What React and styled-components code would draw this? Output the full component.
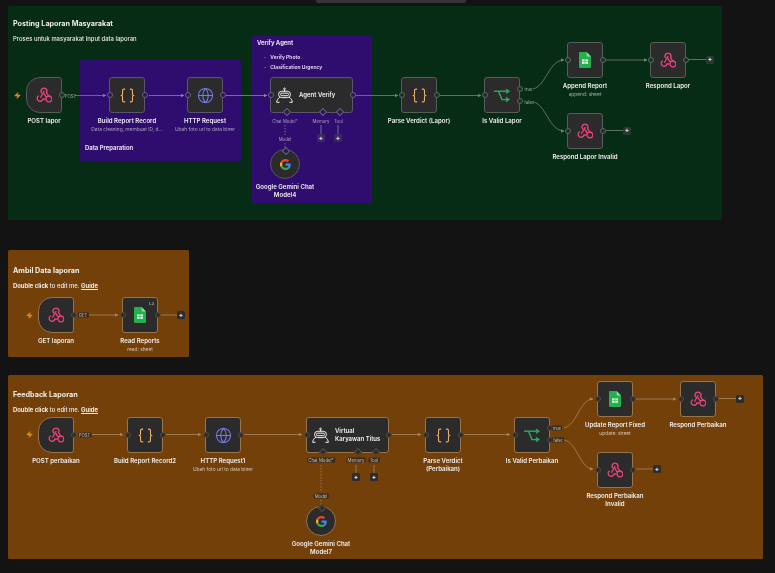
import React from "react";
import styled, { createGlobalStyle } from "styled-components";
import { Braces, Globe, Zap } from "lucide-react";

const GlobalStyle = createGlobalStyle`
  html, body {
    margin: 0;
    padding: 0;
    background: #131313;
  }
`;

const tones = {
  green: { line: "#77827a", handle: "#1d2f23", ring: "#5d675f", border: "#565e58", chip: "transparent", plus: "#2b3a30", sub: "#a3aca5" },
  purple: { line: "#8a8597", handle: "#281a4f", ring: "#676378", border: "#5a5568", chip: "transparent", plus: "#3a2a60", sub: "#aaa2be" },
  brown: { line: "#a68760", handle: "#2c2c2d", ring: "#5a4c3c", border: "#98744a", chip: "#33291f", plus: "#2c2c2d", sub: "#d6c4ae" },
};

const Canvas = styled.div`
  position: relative;
  width: 775px;
  height: 573px;
  overflow: hidden;
  font-family: Inter, "Liberation Sans", sans-serif;
  background-color: #131313;
  background-image: radial-gradient(#242424 0.6px, transparent 0.7px);
  background-size: 6px 6px;
  filter: blur(0.3px);
`;

const TopBar = styled.div`
  position: absolute;
  left: 316px;
  top: 0;
  width: 150px;
  height: 3px;
  background: #353535;
  border-radius: 0 0 2px 2px;
`;

const Note = styled.div`
  position: absolute;
  left: ${(p) => p.$x}px;
  top: ${(p) => p.$y}px;
  width: ${(p) => p.$w}px;
  height: ${(p) => p.$h}px;
  box-sizing: border-box;
  padding: ${(p) => p.$pad}px 5px 8px;
  display: flex;
  flex-direction: column;
  background: ${(p) => p.$bg};
  border-radius: 1.5px;
  color: #f0ece6;
`;

const NoteTitle = styled.div`
  font-size: 7.2px;
  line-height: 10px;
  font-weight: 700;
  margin-bottom: 5px;
`;

const NoteText = styled.div`
  font-size: 5.9px;
  line-height: 10px;
  font-weight: 500;
  b {
    font-weight: 700;
  }
  u {
    font-weight: 700;
    text-underline-offset: 1px;
  }
`;

const PurpleNote = styled(Note)`
  background: #2e0d6e;
  color: #e6dcf8;
  justify-content: ${(p) => (p.$bottom ? "flex-end" : "flex-start")};
`;

const BulletList = styled.ul`
  list-style: none;
  margin: 4px 0 0;
  padding: 0 0 0 7px;
  font-size: 5px;
  line-height: 10px;
  font-weight: 600;
  li::before {
    content: "-";
    margin-right: 4px;
    opacity: 0.6;
  }
`;

const Edges = styled.svg`
  position: absolute;
  left: 0;
  top: 0;
  width: 775px;
  height: 573px;
  pointer-events: none;
`;

const NodeWrap = styled.div`
  position: absolute;
  left: ${(p) => p.$x}px;
  top: ${(p) => p.$y}px;
  width: ${(p) => p.$w}px;
  display: flex;
  flex-direction: column;
  align-items: center;
`;

const radius = { plain: "3px", trigger: "14px 3px 3px 14px", circle: "50%" };

const NodeBox = styled.div`
  position: relative;
  width: ${(p) => p.$w}px;
  height: ${(p) => p.$h}px;
  box-sizing: border-box;
  display: flex;
  align-items: center;
  justify-content: center;
  background: #2b2b2c;
  border: 1px solid ${(p) => tones[p.$tone].border};
  border-radius: ${(p) => radius[p.$kind]};
`;

const AgentInner = styled.div`
  display: flex;
  align-items: center;
  gap: 6px;
  width: 100%;
  padding-left: 5px;
  box-sizing: border-box;
`;

const AgentTitle = styled.div`
  font-size: 6px;
  line-height: 8px;
  font-weight: 600;
  color: #f2f2f2;
  white-space: pre-line;
`;

const Handle = styled.span`
  position: absolute;
  top: ${(p) => p.$top}px;
  ${(p) => p.$side}: -3.5px;
  width: 6px;
  height: 6px;
  margin-top: -3px;
  box-sizing: border-box;
  border-radius: 50%;
  background: ${(p) => tones[p.$tone].handle};
  border: 0.7px solid ${(p) => tones[p.$tone].ring};
`;

const Diamond = styled.span`
  position: absolute;
  left: ${(p) => p.$left}px;
  ${(p) => (p.$top ? "top: -2.5px" : "bottom: -2.5px")};
  width: 4px;
  height: 4px;
  margin-left: -2px;
  background: ${(p) => tones[p.$tone].handle};
  border: 0.6px solid ${(p) => tones[p.$tone].ring};
  transform: rotate(45deg);
`;

const Badge = styled.span`
  position: absolute;
  top: 3px;
  right: 3px;
  font-size: 4px;
  line-height: 5px;
  color: #dddddd;
`;

const NodeLabel = styled.div`
  width: max-content;
  margin-top: 4px;
  font-size: 6.1px;
  line-height: 7.5px;
  font-weight: 600;
  text-align: center;
  white-space: pre-line;
  color: #eeeeee;
`;

const NodeSub = styled.div`
  width: max-content;
  margin-top: 1.5px;
  font-size: 4.85px;
  line-height: 6px;
  text-align: center;
  color: ${(p) => tones[p.$tone].sub};
`;

const Chip = styled.span`
  position: absolute;
  left: ${(p) => p.$x}px;
  top: ${(p) => p.$y}px;
  transform: translate(-50%, -50%);
  padding: 0 1px;
  font-size: 4.3px;
  line-height: 5px;
  white-space: nowrap;
  color: ${(p) => tones[p.$tone].sub};
  background: ${(p) => tones[p.$tone].chip};
  border-radius: 1px;
`;

const Plus = styled.span`
  position: absolute;
  left: ${(p) => p.$x - 4}px;
  top: ${(p) => p.$y - 4}px;
  width: 8px;
  height: 8px;
  display: flex;
  align-items: center;
  justify-content: center;
  font-size: 6.5px;
  font-weight: 700;
  line-height: 1;
  color: #e6e6e6;
  background: ${(p) => tones[p.$tone].plus};
  border-radius: 1.5px;
`;

const Bolt = styled.span`
  position: absolute;
  left: ${(p) => p.$x - 3.5}px;
  top: ${(p) => p.$y - 3.5}px;
  width: 7px;
  height: 7px;
  display: flex;
  color: #e8881a;
`;

// three rings joined into a triangle
const WebhookIcon = () => (
  <svg width="16" height="16" viewBox="0 0 24 24" fill="none" stroke="#e8457c" strokeWidth="2" strokeLinecap="round">
    <path d="M8.2 8.4A4.4 4.4 0 1 1 15.8 8.4L19.4 14.4" />
    <path d="M12 6.6L7 15.4" />
    <path d="M3.6 13.4A4.4 4.4 0 1 0 10.4 18H15.6" />
    <path d="M12 9.8L15.6 15.6A4.4 4.4 0 1 1 15.6 20.2" />
  </svg>
);

const IfIcon = () => (
  <svg width="16" height="13" viewBox="0 0 16 13" fill="none" stroke="#27ae60" strokeWidth="1.4">
    <path d="M0 2.2H14.5" />
    <path d="M12 0.2L14.8 2.2L12 4.2" />
    <path d="M4.5 2.2L8 10.6H14.5" />
    <path d="M12 8.6L14.8 10.6L12 12.6" />
  </svg>
);

const SheetIcon = () => (
  <svg width="12" height="16" viewBox="0 0 12 16">
    <path d="M1.2 0H7.6L12 4.4V14.8C12 15.5 11.5 16 10.8 16H1.2C.5 16 0 15.5 0 14.8V1.2C0 .5.5 0 1.2 0Z" fill="#23b14d" />
    <path d="M7.6 0L12 4.4H8.6C8 4.4 7.6 4 7.6 3.4Z" fill="#8fd6a5" />
    <path d="M3 7.4H9V11.8H3Z" fill="#e9f7ee" />
    <path d="M3 9.3H9M6 7.4V11.8" stroke="#23b14d" strokeWidth="0.7" />
  </svg>
);

const RobotIcon = () => (
  <svg width="17" height="17" viewBox="0 0 24 24" fill="none" stroke="#f4f4f4" strokeWidth="1.4">
    <circle cx="12" cy="2.6" r="1.1" />
    <path d="M12 3.8V6" />
    <rect x="3.6" y="6" width="16.8" height="9" rx="4.5" />
    <rect x="6.4" y="8.7" width="11.2" height="3.6" rx="1.8" />
    <path d="M5.4 14.5C2.6 16 1.2 18.8 1 21.6H5" />
    <path d="M18.6 14.5C21.4 16 22.8 18.8 23 21.6H19" />
  </svg>
);

const GoogleIcon = () => (
  <svg width="11" height="11" viewBox="0 0 48 48">
    <path fill="#EA4335" d="M24 9.5c3.54 0 6.71 1.22 9.21 3.6l6.85-6.85C35.9 2.38 30.47 0 24 0 14.62 0 6.51 5.38 2.56 13.22l7.98 6.19C12.43 13.72 17.74 9.5 24 9.5z" />
    <path fill="#4285F4" d="M46.98 24.55c0-1.57-.15-3.09-.38-4.55H24v9.02h12.94c-.58 2.96-2.26 5.48-4.78 7.18l7.73 6c4.51-4.18 7.09-10.36 7.09-17.65z" />
    <path fill="#FBBC05" d="M10.53 28.59c-.48-1.45-.76-2.99-.76-4.59s.27-3.14.76-4.59l-7.98-6.19C.92 16.46 0 20.12 0 24c0 3.88.92 7.54 2.56 10.78l7.97-6.19z" />
    <path fill="#34A853" d="M24 48c6.48 0 11.93-2.13 15.89-5.81l-7.73-6c-2.15 1.45-4.92 2.3-8.16 2.3-6.26 0-11.57-4.22-13.47-9.91l-7.98 6.19C6.51 42.62 14.62 48 24 48z" />
  </svg>
);

const icons = {
  webhook: <WebhookIcon />,
  code: <Braces size={17} color="#f2b56b" strokeWidth={1.5} />,
  http: <Globe size={17} color="#7a7be8" strokeWidth={1.5} />,
  sheet: <SheetIcon />,
  if: <IfIcon />,
  google: <GoogleIcon />,
};

const n = (tone, x, y, icon, label, extra = {}) => ({ tone, x, y, icon, label, ...extra });

const nodes = [
  n("green", 26, 77, "webhook", "POST lapor", { kind: "trigger" }),
  n("purple", 109, 77, "code", "Build Report Record", { sub: "Data cleaning, membuat ID, d..." }),
  n("purple", 187, 77, "http", "HTTP Request", { sub: "Ubah foto url to data biner" }),
  n("purple", 270, 77, "agent", "", { w: 83, title: "Agent Verify", subs: [15, 51, 68] }),
  n("green", 401, 77, "code", "Parse Verdict (Lapor)"),
  n("green", 484, 77, "if", "Is Valid Lapor", { outs: [12, 24] }),
  n("green", 567, 42, "sheet", "Append Report", { sub: "append: sheet" }),
  n("green", 650, 42, "webhook", "Respond Lapor"),
  n("green", 567, 113, "webhook", "Respond Lapor Invalid"),
  n("purple", 270, 149, "google", "Google Gemini Chat\nModel4", { kind: "circle", w: 30, h: 30 }),

  n("brown", 38, 297, "webhook", "GET laporan", { kind: "trigger" }),
  n("brown", 122, 297, "sheet", "Read Reports", { sub: "read: sheet", badge: "L3" }),

  n("brown", 38, 417, "webhook", "POST perbaikan", { kind: "trigger" }),
  n("brown", 127, 417, "code", "Build Report Record2"),
  n("brown", 205, 417, "http", "HTTP Request1", { sub: "Ubah foto url to data biner" }),
  n("brown", 306, 417, "agent", "", { w: 83, title: "Virtual\nKaryawan Titus", subs: [15, 50, 68] }),
  n("brown", 425, 417, "code", "Parse Verdict\n(Perbaikan)"),
  n("brown", 514, 417, "if", "Is Valid Perbaikan", { outs: [11, 23] }),
  n("brown", 597, 381, "sheet", "Update Report Fixed", { sub: "update: sheet" }),
  n("brown", 680, 381, "webhook", "Respond Perbaikan"),
  n("brown", 597, 452, "webhook", "Respond Perbaikan\nInvalid"),
  n("brown", 306, 506, "google", "Google Gemini Chat\nModel7", { kind: "circle", w: 30, h: 30 }),
];

const lines = [
  ["green", "M75 95.5H106", true],
  ["purple", "M149 95.5H184", true],
  ["purple", "M226 95.5H267", true],
  ["green", "M356 95.5H398", true],
  ["green", "M440 95.5H481", true],
  ["green", "M533 89C546 86 549 60 564 60", true],
  ["green", "M533 102C546 104 549 131 564 131", true],
  ["green", "M606 60H647", true],
  ["green", "M689 59.5H706"],
  ["green", "M606 130.5H623"],
  ["purple", "M321 125V134"],
  ["purple", "M338 125V134"],
  ["purple", "M285 125V135", false, true],
  ["purple", "M285 143V149", false, true],

  ["brown", "M89 315H118", true],
  ["brown", "M160 315H177"],

  ["brown", "M92 434.5H123", true],
  ["brown", "M166 434.5H201", true],
  ["brown", "M244 434.5H302", true],
  ["brown", "M392 434.5H421", true],
  ["brown", "M464 434.5H510", true],
  ["brown", "M564 428C577 425 580 399 593 399", true],
  ["brown", "M564 440C577 442 580 469 593 469", true],
  ["brown", "M636 399H676", true],
  ["brown", "M719 398.5H736"],
  ["brown", "M636 469H653"],
  ["brown", "M356 465V473"],
  ["brown", "M374 465V473"],
  ["brown", "M321 465V492", false, true],
  ["brown", "M321 500V506", false, true],
];

const chips = [
  ["green", 70.5, 95.5, "POST"],
  ["green", 528.5, 89, "true"],
  ["green", 529, 101.5, "false"],
  ["purple", 285, 121, "Chat Model*"],
  ["purple", 321, 121, "Memory"],
  ["purple", 338.5, 121, "Tool"],
  ["purple", 285, 139, "Model"],

  ["brown", 83, 315, "GET"],

  ["brown", 84.5, 434.5, "POST"],
  ["brown", 557, 428, "true"],
  ["brown", 558, 440, "false"],
  ["brown", 321, 460, "Chat Model*"],
  ["brown", 356, 460, "Memory"],
  ["brown", 374, 460, "Tool"],
  ["brown", 321, 495.5, "Model"],
];

const pluses = [
  ["green", 710, 59.5],
  ["green", 627, 130.5],
  ["purple", 321, 138],
  ["purple", 338, 138],
  ["brown", 181, 315],
  ["brown", 740, 398.5],
  ["brown", 657, 469],
  ["brown", 356, 477],
  ["brown", 374, 477],
];

const bolts = [[17, 95], [29, 315], [29, 434]];

const FlowNode = ({ node }) => {
  const { tone, x, y, icon, label, sub, badge, title, subs, outs, kind = "plain", w = 36, h = 36 } = node;
  const noInput = kind === "trigger" || kind === "circle";
  const noOutput = kind === "circle";
  const outTops = outs || [h / 2];
  return (
    <NodeWrap $x={x} $y={y} $w={w}>
      <NodeBox $w={w} $h={h} $kind={kind} $tone={tone}>
        {icon === "agent" ? (
          <AgentInner>
            <RobotIcon />
            <AgentTitle>{title}</AgentTitle>
          </AgentInner>
        ) : (
          icons[icon]
        )}
        {badge && <Badge>{badge}</Badge>}
        {!noInput && <Handle $side="left" $top={h / 2 - 1} $tone={tone} />}
        {!noOutput && outTops.map((top) => <Handle key={top} $side="right" $top={top - 1} $tone={tone} />)}
        {subs && subs.map((left) => <Diamond key={left} $left={left} $tone={tone} />)}
        {kind === "circle" && <Diamond $left={14} $top $tone={tone} />}
      </NodeBox>
      {label && <NodeLabel>{label}</NodeLabel>}
      {sub && <NodeSub $tone={tone}>{sub}</NodeSub>}
    </NodeWrap>
  );
};

export default function App() {
  return (
    <>
      <GlobalStyle />
      <Canvas>
        <TopBar />
        <Note $x={8} $y={6} $w={714} $h={214} $pad={12.5} $bg="#062c15">
          <NoteTitle>Posting Laporan Masyarakat</NoteTitle>
          <NoteText>Proses untuk masyarakat Input data laporan</NoteText>
        </Note>
        <PurpleNote $x={80} $y={60} $w={161} $h={101} $pad={5} $bottom>
          <NoteText>
            <b>Data Preparation</b>
          </NoteText>
        </PurpleNote>
        <PurpleNote $x={252} $y={36} $w={120} $h={167} $pad={2}>
          <NoteText>
            <b>Verify Agent</b>
          </NoteText>
          <BulletList>
            <li>Verify Photo</li>
            <li>Clasification Urgency</li>
          </BulletList>
        </PurpleNote>
        <Note $x={8} $y={250} $w={181} $h={107} $pad={15.5} $bg="#74400a">
          <NoteTitle>Ambil Data laporan</NoteTitle>
          <NoteText>
            <b>Double click</b> to edit me. <u>Guide</u>
          </NoteText>
        </Note>
        <Note $x={8} $y={375} $w={755} $h={184} $pad={15} $bg="#74400a">
          <NoteTitle>Feedback Laporan</NoteTitle>
          <NoteText>
            <b>Double click</b> to edit me. <u>Guide</u>
          </NoteText>
        </Note>

        <Edges viewBox="0 0 775 573" fill="none">
          <defs>
            {Object.keys(tones).map((tone) => (
              <marker key={tone} id={`arrow-${tone}`} markerUnits="userSpaceOnUse" markerWidth="4" markerHeight="4" refX="3.4" refY="2" orient="auto">
                <path d="M0 0L3.6 2L0 4Z" fill={tones[tone].line} />
              </marker>
            ))}
          </defs>
          {lines.map(([tone, d, arrow, dashed]) => (
            <path
              key={d}
              d={d}
              stroke={tones[tone].line}
              strokeWidth="0.8"
              strokeDasharray={dashed ? "1.5 1.5" : undefined}
              markerEnd={arrow ? `url(#arrow-${tone})` : undefined}
            />
          ))}
        </Edges>

        {nodes.map((node) => (
          <FlowNode key={`${node.x}-${node.y}`} node={node} />
        ))}
        {chips.map(([tone, x, y, text]) => (
          <Chip key={`${x}-${y}`} $tone={tone} $x={x} $y={y}>
            {text}
          </Chip>
        ))}
        {pluses.map(([tone, x, y]) => (
          <Plus key={`${x}-${y}`} $tone={tone} $x={x} $y={y}>
            +
          </Plus>
        ))}
        {bolts.map(([x, y]) => (
          <Bolt key={`${x}-${y}`} $x={x} $y={y}>
            <Zap size={7} fill="currentColor" strokeWidth={2} />
          </Bolt>
        ))}
      </Canvas>
    </>
  );
}
